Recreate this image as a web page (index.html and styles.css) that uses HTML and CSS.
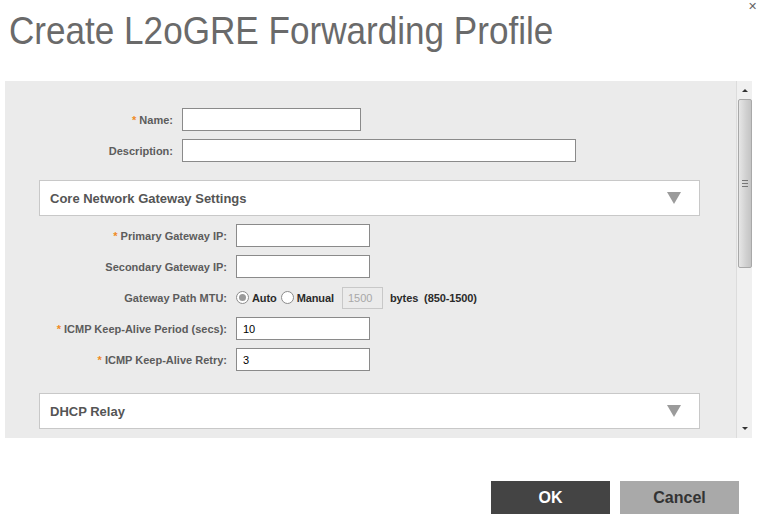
FILE: index.html
```html
<!DOCTYPE html>
<html lang="en">
<head>
  <meta charset="UTF-8">
  <title>Create L2oGRE Forwarding Profile</title>
  <link rel="stylesheet" href="styles.css">
</head>
<body>
  <div class="dialog">
    <h1 class="title"><span class="title-text">Create L2oGRE Forwarding Profile</span></h1>
    <span class="close">✕</span>

    <div class="panel">
      <div class="panel-body">
        <div class="row">
          <label class="label"><span class="req">*</span> Name:</label>
          <input type="text" class="field field-name">
        </div>
        <div class="row">
          <label class="label">Description:</label>
          <input type="text" class="field field-desc">
        </div>

        <div class="section">
          <span>Core Network Gateway Settings</span>
          <span class="caret"></span>
        </div>

        <div class="group">
          <div class="row">
            <label class="label wide"><span class="req">*</span> Primary Gateway IP:</label>
            <input type="text" class="field field-ip">
          </div>
          <div class="row">
            <label class="label wide">Secondary Gateway IP:</label>
            <input type="text" class="field field-ip">
          </div>
          <div class="row">
            <label class="label wide">Gateway Path MTU:</label>
            <div class="radios">
              <span class="radio checked"></span><span class="opt">Auto</span>
              <span class="radio"></span><span class="opt">Manual</span>
              <input type="text" class="mtu" value="1500" disabled>
              <span class="opt">bytes&nbsp; (850-1500)</span>
            </div>
          </div>
          <div class="row">
            <label class="label wide"><span class="req">*</span> ICMP Keep-Alive Period (secs):</label>
            <input type="text" class="field field-ip" value="10">
          </div>
          <div class="row">
            <label class="label wide"><span class="req">*</span> ICMP Keep-Alive Retry:</label>
            <input type="text" class="field field-ip" value="3">
          </div>
        </div>

        <div class="section">
          <span>DHCP Relay</span>
          <span class="caret"></span>
        </div>
      </div>

      <div class="scrollbar">
        <span class="arrow up"></span>
        <div class="thumb"><span class="grip"></span></div>
        <span class="arrow down"></span>
      </div>
    </div>

    <div class="footer">
      <button type="button" class="btn btn-ok">OK</button>
      <button type="button" class="btn btn-cancel">Cancel</button>
    </div>
  </div>
</body>
</html>
```

FILE: styles.css
```css
body { margin: 0; background: #fff; font-family: 'Liberation Sans', Arial, sans-serif; overflow: hidden; }
.dialog { position: relative; width: 759px; height: 519px; }

.title {
  margin: 0; height: 81px; padding: 9px 0 0 9px; box-sizing: border-box;
  font-family: 'Liberation Sans', sans-serif;
  font-size: 39px; font-weight: normal; color: #6a6a6a; white-space: nowrap;
}
.title-text { display: inline-block; transform: scaleX(0.9); transform-origin: left center; }
.close { position: absolute; left: 748px; top: 0; font-size: 11px; color: #666; }

.panel { display: flex; margin-left: 5px; width: 747px; height: 357px; }
.panel-body { flex: 1; background: #ebebeb; padding-top: 27px; overflow: hidden; }

.row { display: flex; align-items: center; gap: 9px; height: 23px; margin-bottom: 8px; }
.label { width: 168px; text-align: right; font-size: 11px; font-weight: bold; color: #5c5c5c; }
.label.wide { width: 222px; }
.req { color: #f08a24; }

.field {
  height: 23px; box-sizing: border-box; border: 1px solid #8a8a8a; background: #fff;
  font-family: 'Liberation Sans', Arial, sans-serif; font-size: 11px; padding: 2px 6px; color: #000;
}
.field-name { width: 179px; }
.field-desc { width: 394px; }
.field-ip { width: 134px; }

.section {
  display: flex; justify-content: space-between; align-items: center;
  margin: 18px 0 0 34px; width: 661px; height: 36px; box-sizing: border-box;
  padding: 0 18px 0 10px; background: #fff; border: 1px solid #c8c8c8;
  font-size: 13px; font-weight: bold; color: #555;
}
.caret { width: 0; height: 0; border-left: 7px solid transparent; border-right: 7px solid transparent; border-top: 12px solid #9b9b9b; }

.group { padding-top: 8px; margin-bottom: 22px; }

.radios { display: flex; align-items: center; font-size: 11px; font-weight: bold; color: #2a2a2a; }
.radio {
  width: 11px; height: 11px; border-radius: 50%; border: 1px solid #8c8c8c; background: #fff;
  margin-right: 3px; position: relative;
}
.radio.checked::after {
  content: ""; position: absolute; left: 2px; top: 2px; width: 7px; height: 7px; border-radius: 50%; background: #9a9a9a;
}
.opt { margin-right: 4px; letter-spacing: -0.1px; }
.mtu {
  width: 41px; height: 22px; box-sizing: border-box; margin: 0 7px 0 4px; padding: 2px 5px;
  border: 1px solid #c8c8c8; background: #ebebeb; color: #a8a8a8; font-size: 11px;
  font-family: 'Liberation Sans', Arial, sans-serif;
}

.scrollbar {
  width: 16px; box-sizing: border-box; background: #f0f0f0; border-left: 1px solid #dcdcdc;
  display: flex; flex-direction: column; align-items: center;
}
.arrow { width: 0; height: 0; border-left: 3px solid transparent; border-right: 3px solid transparent; }
.arrow.up { border-bottom: 3px solid #333; margin: 8px 0 7px; }
.arrow.down { border-top: 3px solid #333; margin-top: auto; margin-bottom: 8px; }
.thumb {
  width: 14px; height: 169px; box-sizing: border-box; border: 1px solid #a8a8a8; border-radius: 2px;
  background: linear-gradient(to right, #e6e6e6, #d0d0d0 60%, #c4c4c4);
  display: flex; align-items: center; justify-content: center;
}
.grip { width: 6px; height: 5px; border-top: 1px solid #777; border-bottom: 1px solid #777; position: relative; }
.grip::after { content: ""; position: absolute; left: 0; right: 0; top: 2px; border-top: 1px solid #777; }

.footer { display: flex; justify-content: flex-end; gap: 10px; padding: 43px 20px 0 0; }
.btn {
  width: 119px; height: 33px; border: none; cursor: pointer;
  font-family: 'Liberation Sans', sans-serif; font-size: 16px; font-weight: bold;
}
.btn-ok { background: #444; color: #fff; }
.btn-cancel { background: #a9a9a9; color: #333; }
```
